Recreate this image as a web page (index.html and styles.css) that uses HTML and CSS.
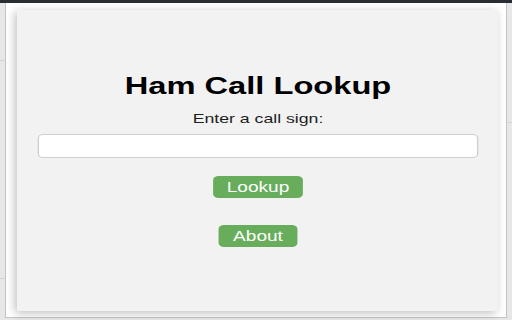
FILE: index.html
```html
<!DOCTYPE html>
<html lang="en">
<head>
<meta charset="utf-8">
<title>Ham Call Lookup</title>
<link rel="stylesheet" href="styles.css">
</head>
<body>
  <div class="topbar"></div>
  <div class="frame">
    <div class="panel">
      <div class="content">
        <h1 class="title">Ham Call Lookup</h1>
        <label class="label" for="call">Enter a call sign:</label>
        <input class="field" id="call" type="text">
        <button class="btn btn-lookup" type="button">Lookup</button>
        <button class="btn btn-about" type="button">About</button>
      </div>
    </div>
  </div>
</body>
</html>
```

FILE: styles.css
```css
html, body {
  margin: 0;
  padding: 0;
}

body {
  width: 512px;
  height: 320px;
  overflow: hidden;
  background:
    linear-gradient(#d2d3d6, #d2d3d6) 0 60px / 5px 1px no-repeat,
    linear-gradient(#d2d3d6, #d2d3d6) 0 278px / 5px 1px no-repeat,
    linear-gradient(#d2d3d6, #d2d3d6) 507px 122px / 5px 1px no-repeat,
    #e7e7ea;
  font-family: "Liberation Sans", Arial, sans-serif;
}

.topbar {
  height: 3px;
  background: #2b2d34;
}

.frame {
  margin-left: 5px;
  width: 502px;
  height: 315px;
  background: #ffffff;
  border: 1px solid #c4c4c4;
  border-top: none;
  box-sizing: border-box;
  padding-top: 7px;
  padding-left: 11px;
}

.panel {
  width: 481px;
  height: 301px;
  background: #f2f2f2;
  box-shadow: -2px 2px 9px rgba(0, 0, 0, 0.26);
  display: flex;
  flex-direction: column;
  align-items: center;
  padding-top: 62px;
  box-sizing: border-box;
}

.content {
  width: 324px;
  display: flex;
  flex-direction: column;
  align-items: center;
  transform: scaleX(1.36);
  transform-origin: center top;
}

.title {
  margin: 0;
  font-size: 24px;
  line-height: 28px;
  font-weight: bold;
  color: #000000;
}

.label {
  margin-top: 11px;
  font-size: 13px;
  line-height: 15px;
  color: #1e1e1e;
}

.field {
  margin-top: 8px;
  width: 324px;
  height: 24px;
  box-sizing: border-box;
  border: 1px solid #cfcfcf;
  border-radius: 4px;
  background: #ffffff;
  padding: 0 6px;
  font-family: inherit;
  font-size: 13px;
}

.btn {
  height: 22px;
  padding: 0 10.5px;
  border: none;
  border-radius: 4px;
  background: #67ad5b;
  color: #ffffff;
  font-family: inherit;
  font-size: 14px;
  line-height: 22px;
}

.btn-lookup {
  margin-top: 18px;
}

.btn-about {
  margin-top: 27px;
}
```
